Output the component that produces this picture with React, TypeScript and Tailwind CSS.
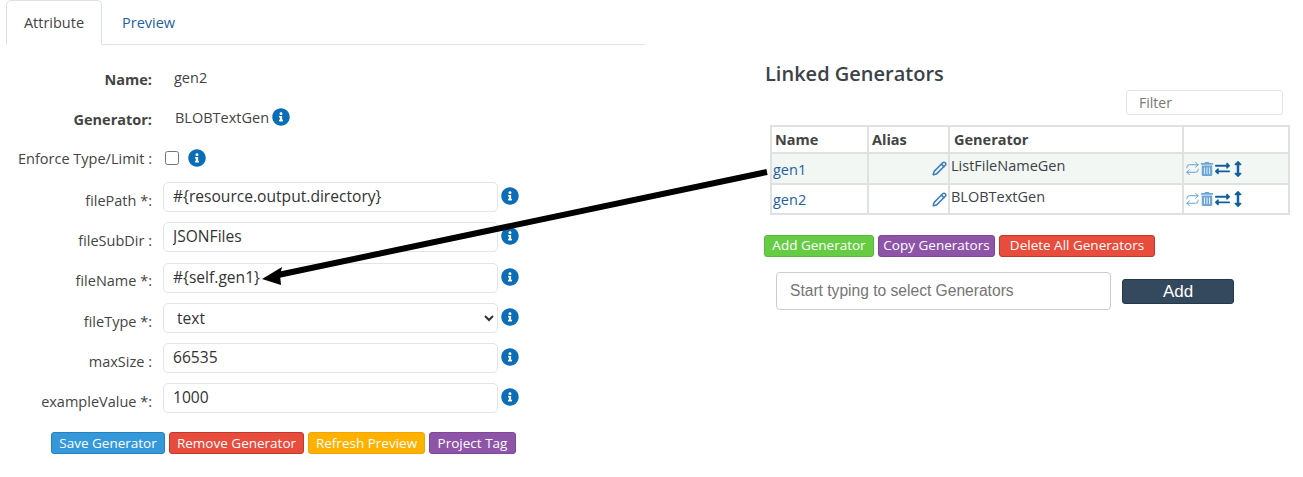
import { FaInfoCircle, FaTrashAlt, FaExchangeAlt, FaArrowsAltV } from "react-icons/fa";
import { Pencil, Repeat } from "lucide-react";

const fields = [
  { label: "filePath *:", value: "#{resource.output.directory}" },
  { label: "fileSubDir :", value: "JSONFiles" },
  { label: "fileName *:", value: "#{self.gen1}" },
  { label: "fileType *:", value: "text", select: true },
  { label: "maxSize :", value: "66535" },
  { label: "exampleValue *:", value: "1000" },
];

const generators = [
  { name: "gen1", type: "ListFileNameGen", rowClass: "h-[31px] bg-[#f2f7f3]", typeClass: "pb-[5px]" },
  { name: "gen2", type: "BLOBTextGen", rowClass: "h-[30px] bg-white", typeClass: "pb-[4px]" },
];

function Info({ className = "" }: { className?: string }) {
  return <FaInfoCircle className={`text-[#0a6db5] text-[18px] shrink-0 ${className}`} />;
}

function Btn({ children, className }: { children: string; className: string }) {
  return (
    <button className={`h-[22px] rounded-[3px] border text-[13.5px] leading-none text-white ${className}`}>
      {children}
    </button>
  );
}

export default function App() {
  return (
    <div className="relative h-[477px] w-[1303px] overflow-hidden bg-white font-['Open_Sans',sans-serif] text-[#444]">
      <div className="flex">
        {/* left: attribute form */}
        <div className="w-[645px] shrink-0">
          <div className="flex h-[45px] border-b border-[#dee2e6] ml-[6px]">
            <div className="w-[96px] h-[45px] border border-b-white border-[#dee2e6] rounded-t-[5px] flex items-center justify-center text-[14.5px] text-[#444]">
              Attribute
            </div>
            <div className="ml-[20px] pt-[12px] text-[14.5px] text-[#1f5f9e]">Preview</div>
          </div>

          <div className="mt-[19px] flex flex-col">
            <div className="flex h-[30px] items-center">
              <span className="w-[152px] pt-[2px] text-right text-[14.5px] font-bold">Name:</span>
              <span className="ml-[22px] pb-[2px] text-[14.5px]">gen2</span>
            </div>
            <div className="mt-[9px] flex h-[30px] items-center">
              <span className="w-[152px] pt-[4px] text-right text-[14.5px] font-bold">Generator:</span>
              <span className="ml-[23px] pb-[1px] text-[14.5px]">BLOBTextGen</span>
              <Info className="ml-[3px] mb-[3px]" />
            </div>
            <div className="mt-[10px] flex h-[30px] items-center">
              <span className="w-[152px] pt-[2px] text-right text-[14.5px]">Enforce Type/Limit :</span>
              <input type="checkbox" className="ml-[13px] h-[14px] w-[14px]" />
              <Info className="ml-[9px]" />
            </div>

            <div className="mt-[9px] flex flex-col gap-[10.3px]">
              {fields.map((f) => (
                <div key={f.label} className="flex h-[30px] items-center">
                  <span className="w-[152px] pt-[7px] text-right text-[14.5px]">{f.label}</span>
                  {f.select ? (
                    <select
                      defaultValue={f.value}
                      className="ml-[11px] h-[30px] w-[335px] rounded-[5px] border border-[#e3e5e8] bg-white pl-[9px] text-[15.6px] text-[#333]"
                    >
                      <option>{f.value}</option>
                    </select>
                  ) : (
                    <input
                      readOnly
                      value={f.value}
                      className="ml-[11px] h-[30px] w-[335px] rounded-[5px] border border-[#e3e5e8] bg-white px-[9px] pb-[2px] text-[15.6px] text-[#333]"
                    />
                  )}
                  <Info className="ml-[3px] mb-[2px]" />
                </div>
              ))}
            </div>

            <div className="mt-[19px] ml-[51px] flex gap-[4px]">
              <Btn className="w-[114px] bg-[#3498db] border-[#2a80b9]">Save Generator</Btn>
              <Btn className="w-[135px] bg-[#e74c3c] border-[#c0392b]">Remove Generator</Btn>
              <Btn className="w-[117px] bg-[#ffb100] border-[#f0a800]">Refresh Preview</Btn>
              <Btn className="w-[87px] bg-[#8e54a8] border-[#7d4698]">Project Tag</Btn>
            </div>
          </div>
        </div>

        {/* right: linked generators */}
        <div className="ml-[120px] w-[525px] shrink-0 pt-[60px]">
          <h2 className="text-[20px] leading-[28px] font-semibold text-[#3c4248]">Linked Generators</h2>
          <div className="mt-[2px] flex justify-end pr-[7px]">
            <input
              placeholder="Filter"
              className="h-[25px] w-[157px] rounded-[3px] border border-[#e3e5e8] px-[12px] text-[14px] placeholder:text-[#777]"
            />
          </div>

          <table className="ml-[5px] mt-[10px] w-[520px] table-fixed border-collapse border-2 border-[#dfe2e0] text-[14.5px]">
            <thead>
              <tr className="h-[27px] text-left">
                <th className="w-[97px] border-2 border-[#dfe2e0] pl-[3px] font-bold">Name</th>
                <th className="w-[81px] border-2 border-[#dfe2e0] pl-[3px] font-bold">Alias</th>
                <th className="w-[234px] border-2 border-[#dfe2e0] pl-[4px] font-bold">Generator</th>
                <th className="border-2 border-[#dfe2e0]"></th>
              </tr>
            </thead>
            <tbody>
              {generators.map((g) => (
                <tr key={g.name} className={g.rowClass}>
                  <td className="border-2 border-[#dfe2e0] pl-[1px] pt-[2px] text-[#1f5f9e]">{g.name}</td>
                  <td className="border-2 border-[#dfe2e0] pr-[1px]">
                    <div className="flex justify-end">
                      <Pencil size={15} strokeWidth={2.5} className="text-[#3d7fb8]" />
                    </div>
                  </td>
                  <td className={`border-2 border-[#dfe2e0] pl-[1px] text-[#3c4248] ${g.typeClass}`}>{g.type}</td>
                  <td className="border-2 border-[#dfe2e0] pl-[1px]">
                    <div className="flex items-center">
                      <Repeat size={15} strokeWidth={1.5} className="text-[#5b9bd0]" />
                      <FaTrashAlt className="text-[14px] text-[#6ba6d6]" />
                      <FaExchangeAlt className="ml-[1px] text-[15px] text-[#10609f]" />
                      <FaArrowsAltV className="text-[16px] text-[#10609f]" />
                    </div>
                  </td>
                </tr>
              ))}
            </tbody>
          </table>

          <div className="mt-[20px] ml-[-1px] flex gap-[4px]">
            <Btn className="w-[110px] bg-[#66cc44] border-[#5cb83c]">Add Generator</Btn>
            <Btn className="w-[117px] bg-[#8e54a8] border-[#7d4698]">Copy Generators</Btn>
            <Btn className="w-[156px] bg-[#e74c3c] border-[#c0392b]">Delete All Generators</Btn>
          </div>

          <div className="mt-[15px] ml-[11px] flex items-center font-['Liberation_Sans',sans-serif]">
            <input
              placeholder="Start typing to select Generators"
              className="h-[38px] w-[335px] rounded-[4px] border border-[#cccccc] px-[13px] text-[15.6px] placeholder:text-[#757575]"
            />
            <button className="ml-[11px] h-[25px] w-[112px] rounded-[3px] border border-[#22384c] bg-[#34495e] text-[17px] leading-none text-white">
              Add
            </button>
          </div>
        </div>
      </div>

      {/* annotation arrow over the page */}
      <svg className="absolute inset-0 pointer-events-none" width="1303" height="477" viewBox="0 0 1303 477">
        <line x1="767" y1="172" x2="278" y2="275" stroke="#000" strokeWidth="6" />
        <polygon points="262,279 282,267 280,275 281,285" fill="#000" />
      </svg>
    </div>
  );
}
